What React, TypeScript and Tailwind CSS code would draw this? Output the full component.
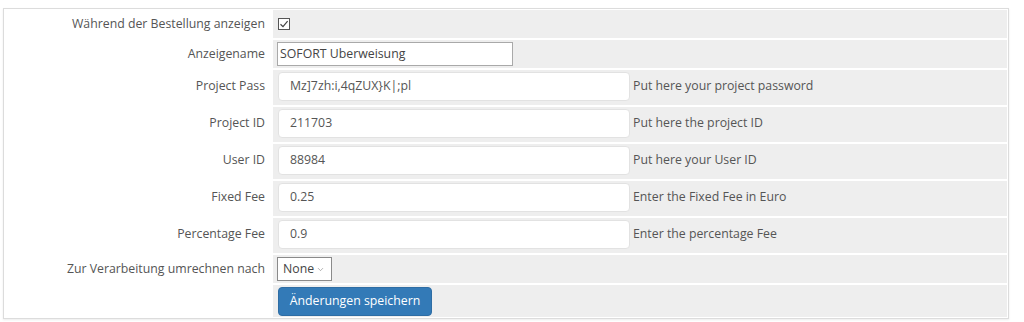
import { ChevronDown } from "lucide-react";

const font = { fontFamily: '"Open Sans", "Liberation Sans", sans-serif' };

type Field = { label: string; value: string; help: string };

const fields: Field[] = [
  { label: "Project Pass", value: "Mz]7zh:i,4qZUX}K|;pl", help: "Put here your project password" },
  { label: "Project ID", value: "211703", help: "Put here the project ID" },
  { label: "User ID", value: "88984", help: "Put here your User ID" },
  { label: "Fixed Fee", value: "0.25", help: "Enter the Fixed Fee in Euro" },
  { label: "Percentage Fee", value: "0.9", help: "Enter the percentage Fee" },
];

// label and control share a line box of height `line`, placed 2px below the row top
function Row({ label, h, line, children }: { label?: string; h: string; line: string; children: React.ReactNode }) {
  return (
    <div className={`flex gap-[2px] ${h}`}>
      <div className="flex w-[266px] shrink-0 items-start justify-end bg-white pr-[6px] pt-[2px] text-[12.3px] text-[#555]">
        <span className={`flex items-center ${line}`}>{label}</span>
      </div>
      <div className={`flex flex-1 items-start bg-[#eeeeee] pl-[5px] pt-[2px]`}>
        <div className={`flex items-center ${line}`}>{children}</div>
      </div>
    </div>
  );
}

export default function App() {
  return (
    <div className="h-[322px] w-[1024px] bg-white pl-[3px] pt-[8px]" style={font}>
      <div className="flex h-[311px] w-[1006px] flex-col gap-[2px] border border-[#dcdcdc] bg-white p-[1px] shadow-[0_1px_2px_rgba(0,0,0,0.08)]">
        <Row label="Während der Bestellung anzeigen" h="h-[28px]" line="h-[24px]">
          <span className="flex h-[12px] w-[12px] items-center justify-center border border-[#555] bg-white">
            <svg width="10" height="10" viewBox="0 0 10 10">
              <path d="M1.5 5.2 L4 7.6 L8.6 2.2" fill="none" stroke="#444" strokeWidth="1.2" />
            </svg>
          </span>
        </Row>
        <Row label="Anzeigename" h="h-[28px]" line="h-[24px]">
          <div className="-ml-[1px] flex h-[24px] w-[236px] items-center border border-[#a9a9a9] bg-white pl-[2px] text-[12.3px] text-[#444]">
            SOFORT Uberweisung
          </div>
        </Row>
        {fields.map((f) => (
          <Row key={f.label} label={f.label} h="h-[35px]" line="h-[29px]">
            <div className="flex h-[29px] w-[352px] items-center rounded-[4px] border border-[#e2e2e2] bg-white pl-[11px] text-[12.3px] text-[#555]">
              {f.value}
            </div>
            <span className="ml-[3px] text-[12.3px] text-[#555]">{f.help}</span>
          </Row>
        ))}
        <Row label="Zur Verarbeitung umrechnen nach" h="h-[28px]" line="h-[24px]">
          <div className="-ml-[1px] flex h-[24px] w-[55px] items-center justify-between border border-[#8a8a8a] bg-white pl-[5px] pr-[6px] text-[12.3px] text-[#444]">
            <span>None</span>
            <ChevronDown className="h-[9px] w-[9px] text-[#777]" strokeWidth={1.5} />
          </div>
        </Row>
        <Row h="h-[32px]" line="h-[29px]">
          <button className="-mt-[1px] flex h-[29px] w-[154px] items-center justify-center rounded-[4px] border border-[#2e6da4] bg-[#337ab7] text-[12.3px] text-white">
            Änderungen speichern
          </button>
        </Row>
      </div>
    </div>
  );
}
